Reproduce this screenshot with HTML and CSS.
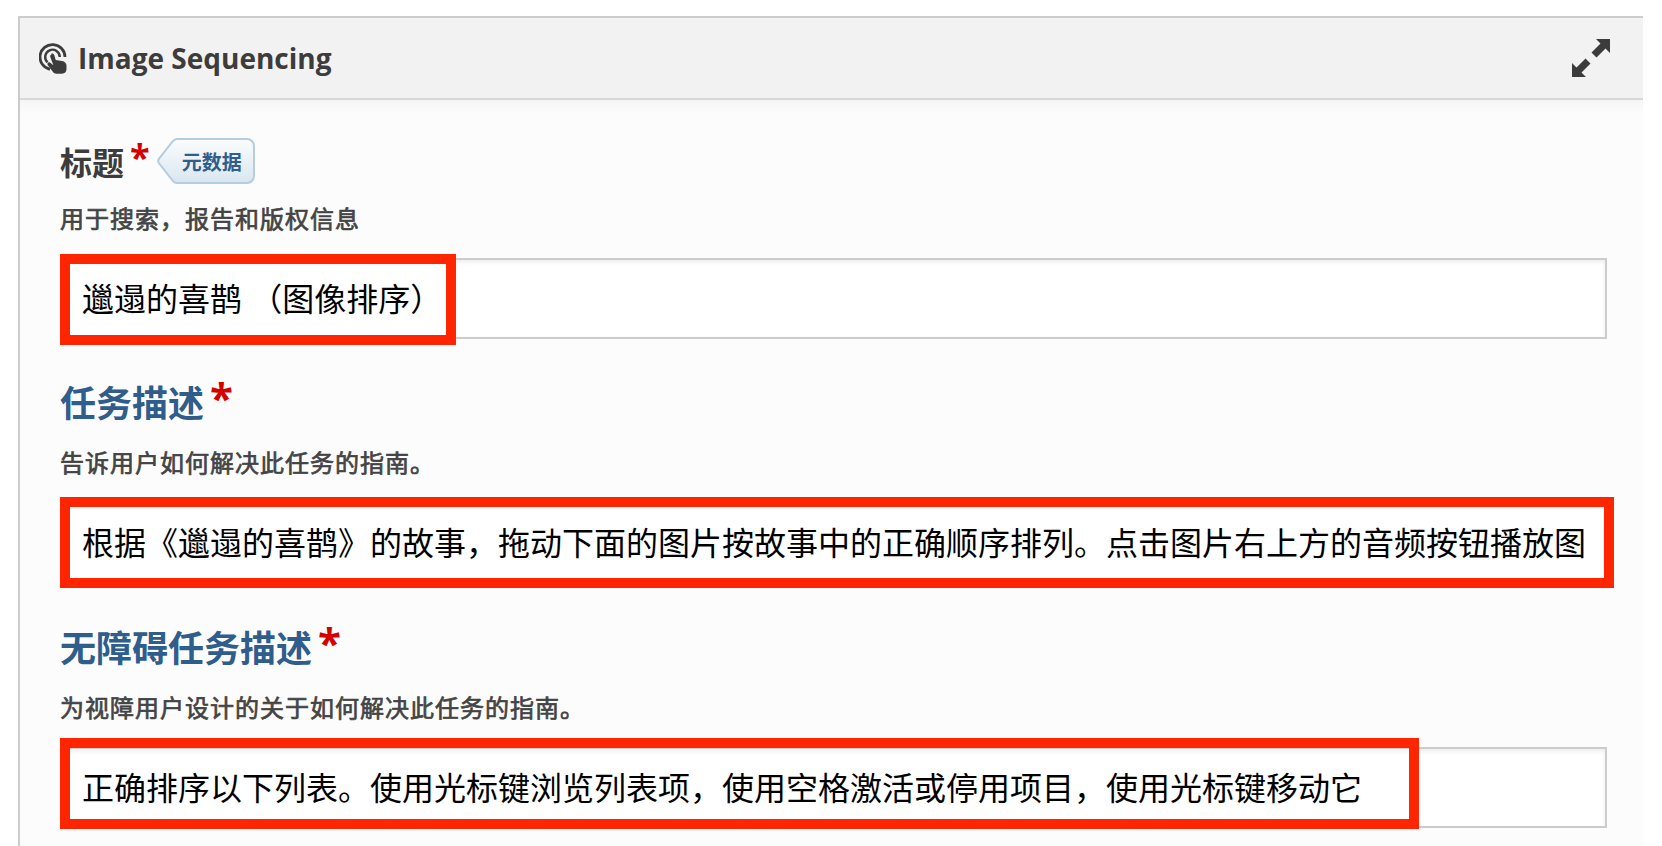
FILE: index.html
```html
<!DOCTYPE html>
<html>
  <head>
    <meta name="viewport" content="width=device-width, initial-scale=1" />
    <title>Image Sequencing</title>
    <link rel="stylesheet" href="styles.css">
  </head>
  <body>
    <div class="panel">
      <div class="panel-head">
        <div class="panel-title">
          <svg class="touch-icon" viewBox="0 0 28 31" width="28" height="31">
            <path d="M11 26.300A12.500 12.500 0 1 1 26 14" fill="none" stroke="#3c3c3c" stroke-width="2.800"/>
            <path d="M8.500 19.300A7.300 7.300 0 1 1 20.800 14" fill="none" stroke="#3c3c3c" stroke-width="2.400"/>
            <path d="M12.300 10.800c1.200-.6 2.500 0 2.900 1.300l1.500 5 6.300 1c2.800.5 4.500 2.300 4.500 4.700v3.200c0 2.900-1.800 4.700-4.600 4.700h-5.600c-1.400 0-2.500-.6-3.300-1.700l-5.200-6.800c-1.400-1.900 1-3.900 2.800-2.300l2.800 2.400-3.100-8.200c-.4-1.100.1-2 1-2.300z" fill="#3c3c3c"/>
          </svg>
          <span>Image Sequencing</span>
        </div>
        <svg class="expand-icon" viewBox="0 0 38 38" width="38" height="38">
          <path d="M38 0V14L33.500 9.500 24.500 18.500 19.500 13.500 28.500 4.500 24 0Z" fill="#3c3c3c"/>
          <path d="M0 38V24L4.500 28.500 13.500 19.500 18.500 24.500 9.500 33.500 14 38Z" fill="#3c3c3c"/>
        </svg>
      </div>

      <div class="panel-body">
        <div class="field field-first">
          <div class="label-row">
            <span class="label label-dark">标题</span>
            <span class="required required-small">*</span>
            <span class="tag">
              <svg class="tag-shape" viewBox="0 0 98 46" width="98" height="46">
                <defs>
                  <linearGradient id="tagFill" x1="0" y1="0" x2="0" y2="1">
                    <stop offset="0" stop-color="#fbfcfd"/>
                    <stop offset="1" stop-color="#d9e6f0"/>
                  </linearGradient>
                </defs>
                <path d="M20 1H90a7 7 0 0 1 7 7V38a7 7 0 0 1-7 7H20a6 6 0 0 1-4-2L2.500 26a4.500 4.500 0 0 1 0-6L16 3a6 6 0 0 1 4-2z" fill="url(#tagFill)" stroke="#b5cde0" stroke-width="2"/>
              </svg>
              <span class="tag-text">元数据</span>
            </span>
          </div>
          <div class="desc">用于搜索，报告和版权信息</div>
          <div class="input-wrap">
            <div class="input">邋遢的喜鹊 （图像排序）</div>
            <div class="mark mark-title"></div>
          </div>
        </div>

        <div class="field">
          <div class="label-row">
            <span class="label">任务描述</span>
            <span class="required">*</span>
          </div>
          <div class="desc">告诉用户如何解决此任务的指南。</div>
          <div class="input-wrap">
            <div class="input">根据《邋遢的喜鹊》的故事，拖动下面的图片按故事中的正确顺序排列。点击图片右上方的音频按钮播放图</div>
            <div class="mark mark-task"></div>
          </div>
        </div>

        <div class="field">
          <div class="label-row">
            <span class="label">无障碍任务描述</span>
            <span class="required">*</span>
          </div>
          <div class="desc">为视障用户设计的关于如何解决此任务的指南。</div>
          <div class="input-wrap">
            <div class="input">正确排序以下列表。使用光标键浏览列表项，使用空格激活或停用项目，使用光标键移动它</div>
            <div class="mark mark-a11y"></div>
          </div>
        </div>
      </div>
    </div>
  </body>
</html>
```

FILE: styles.css
```css
html, body {
  margin: 0;
  height: 846px;
  overflow: hidden;
}
body {
  background-color: white;
  color: #3c3c3c;
  font-family: "Open Sans", "Noto Sans CJK SC", sans-serif;
  padding: 16px 19px 0 18px;
  box-sizing: border-box;
}
.panel {
  border-top: 2px solid #ccc;
  border-left: 2px solid #ccc;
  background-color: #fcfcfc;
  height: 830px;
}
.panel-head {
  height: 80px;
  padding: 0 33px 0 19px;
  background-color: #f2f2f2;
  border-bottom: 2px solid #d8d8d8;
  display: flex;
  align-items: center;
  justify-content: space-between;
}
.panel-title {
  display: flex;
  align-items: center;
  gap: 11px;
  font-size: 28px;
  font-weight: 700;
}
.panel-body {
  padding: 0 36px 0 40px;
  background: linear-gradient(#f5f5f5, #fcfcfc 14px);
}
.field {
  height: 245px;
}
.field-first {
  height: 240px;
}
.label-row {
  display: flex;
  align-items: flex-start;
  height: 109px;
  padding-top: 39px;
  box-sizing: border-box;
}
.field-first .label-row {
  height: 105px;
  padding-top: 38px;
}
.label {
  font-size: 36px;
  line-height: 50px;
  font-weight: 700;
  color: #2f5d8c;
}
.label-dark {
  font-size: 32px;
  color: #3c3c3c;
}
.required {
  color: #d40000;
  font-family: "Open Sans", sans-serif;
  font-size: 42px;
  font-weight: 700;
  line-height: 42px;
  margin-left: 6px;
  margin-top: -3px;
}
.required-small {
  font-size: 36px;
  line-height: 36px;
  margin-top: 1px;
}
.tag {
  position: relative;
  width: 98px;
  height: 46px;
  margin-left: 7px;
  display: flex;
  align-items: center;
  justify-content: flex-end;
}
.tag-shape {
  position: absolute;
  left: 0;
  top: 0;
}
.tag-text {
  position: relative;
  font-size: 20px;
  font-weight: 700;
  color: #2f5d8c;
  margin-right: 13px;
}
.desc {
  font-size: 24px;
  letter-spacing: 1px;
  -webkit-text-stroke: 0.7px #444;
  line-height: 30px;
  color: #444;
  margin-top: -1px;
  margin-bottom: 24px;
}
.input-wrap {
  position: relative;
}
.input {
  height: 81px;
  box-sizing: border-box;
  border: 2px solid #ccc;
  background-color: white;
  box-shadow: inset 0 2px 4px rgba(0, 0, 0, 0.08);
  padding: 0 21px 0 20px;
  font-size: 32px;
  line-height: 77px;
  color: black;
  white-space: nowrap;
  overflow: hidden;
}
.mark {
  position: absolute;
  left: 0;
  height: 91px;
  box-sizing: border-box;
  border: 10px solid #ff2500;
}
.mark-title {
  top: -4px;
  width: 396px;
}
.mark-task {
  top: -5px;
  width: 1554px;
}
.mark-a11y {
  top: -9px;
  width: 1359px;
}
```
